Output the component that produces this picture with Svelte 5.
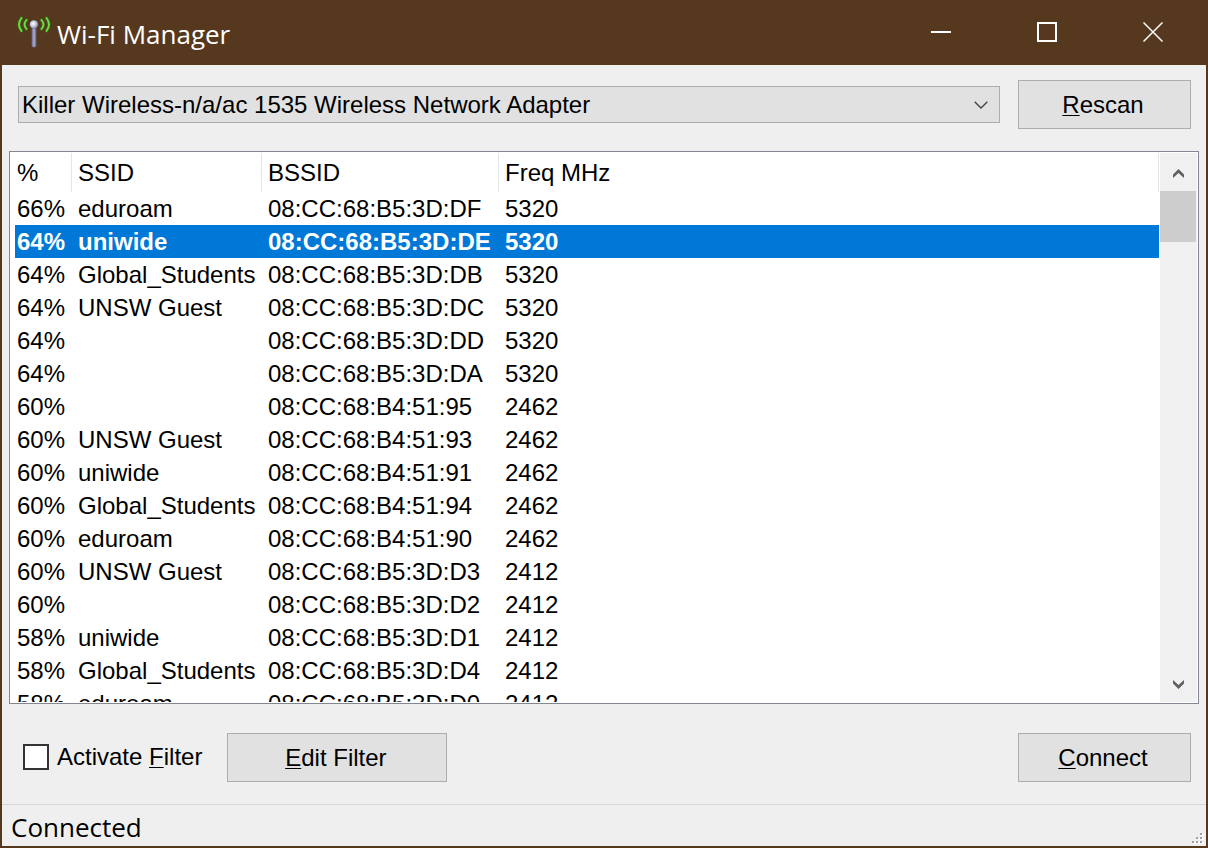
<script>
  const networks = $state([
    { signal: '66%', ssid: 'eduroam', bssid: '08:CC:68:B5:3D:DF', freq: 5320 },
    { signal: '64%', ssid: 'uniwide', bssid: '08:CC:68:B5:3D:DE', freq: 5320 },
    { signal: '64%', ssid: 'Global_Students', bssid: '08:CC:68:B5:3D:DB', freq: 5320 },
    { signal: '64%', ssid: 'UNSW Guest', bssid: '08:CC:68:B5:3D:DC', freq: 5320 },
    { signal: '64%', ssid: '', bssid: '08:CC:68:B5:3D:DD', freq: 5320 },
    { signal: '64%', ssid: '', bssid: '08:CC:68:B5:3D:DA', freq: 5320 },
    { signal: '60%', ssid: '', bssid: '08:CC:68:B4:51:95', freq: 2462 },
    { signal: '60%', ssid: 'UNSW Guest', bssid: '08:CC:68:B4:51:93', freq: 2462 },
    { signal: '60%', ssid: 'uniwide', bssid: '08:CC:68:B4:51:91', freq: 2462 },
    { signal: '60%', ssid: 'Global_Students', bssid: '08:CC:68:B4:51:94', freq: 2462 },
    { signal: '60%', ssid: 'eduroam', bssid: '08:CC:68:B4:51:90', freq: 2462 },
    { signal: '60%', ssid: 'UNSW Guest', bssid: '08:CC:68:B5:3D:D3', freq: 2412 },
    { signal: '60%', ssid: '', bssid: '08:CC:68:B5:3D:D2', freq: 2412 },
    { signal: '58%', ssid: 'uniwide', bssid: '08:CC:68:B5:3D:D1', freq: 2412 },
    { signal: '58%', ssid: 'Global_Students', bssid: '08:CC:68:B5:3D:D4', freq: 2412 },
    { signal: '58%', ssid: 'eduroam', bssid: '08:CC:68:B5:3D:D0', freq: 2412 }
  ]);
  let selected = $state(1);
  let filterActive = $state(false);
</script>

<div class="window">
  <header class="titlebar">
    <svg class="logo" width="34" height="34" viewBox="0 0 34 34" aria-hidden="true">
      <defs>
        <linearGradient id="mast" x1="0" x2="1" y1="0" y2="0">
          <stop offset="0" stop-color="#7d7fae" />
          <stop offset="0.5" stop-color="#a9abd6" />
          <stop offset="1" stop-color="#7375a2" />
        </linearGradient>
        <radialGradient id="ball" cx="0.4" cy="0.4" r="0.65">
          <stop offset="0" stop-color="#ffffff" />
          <stop offset="0.5" stop-color="#c9cbe0" />
          <stop offset="1" stop-color="#6f7198" />
        </radialGradient>
      </defs>
      <rect x="15" y="12" width="4" height="19" rx="1" fill="url(#mast)" stroke="#6f6a78" stroke-width="0.8" />
      <circle cx="17" cy="8.500" r="4.200" fill="url(#ball)" />
      <g fill="none" stroke="#2f7d1c" stroke-width="3.200" stroke-linecap="round" opacity="0.7">
        <path d="M9.500 4Q5.500 8.500 9.500 13M24.500 4Q28.500 8.500 24.500 13M4.500 2Q-0.500 8.500 4.500 15M29.500 2Q34.500 8.500 29.500 15" />
      </g>
      <g fill="none" stroke="#6fdc45" stroke-width="1.800" stroke-linecap="round">
        <path d="M9.500 4Q5.500 8.500 9.500 13M24.500 4Q28.500 8.500 24.500 13M4.500 2Q-0.500 8.500 4.500 15M29.500 2Q34.500 8.500 29.500 15" />
      </g>
    </svg>
    <h1>Wi-Fi Manager</h1>
    <div class="caption">
      <button aria-label="Minimize">
        <svg width="20" height="20" viewBox="0 0 20 20"><path d="M0 10H20" /></svg>
      </button>
      <button aria-label="Maximize">
        <svg width="20" height="20" viewBox="0 0 20 20"><rect x="1" y="1" width="18" height="18" /></svg>
      </button>
      <button aria-label="Close">
        <svg width="20" height="20" viewBox="0 0 20 20"><path class="thin" d="M0.500 0.500L19.500 19.500M19.500 0.500L0.500 19.500" /></svg>
      </button>
    </div>
  </header>

  <main>
    <div class="toolbar">
      <div class="combo">
        <select aria-label="Network adapter">
          <option>Killer Wireless-n/a/ac 1535 Wireless Network Adapter</option>
        </select>
        <svg width="14" height="8" viewBox="0 0 14 8" aria-hidden="true"><path d="M0.700 0.700L7 7L13.300 0.700" /></svg>
      </div>
      <button class="push"><u>R</u>escan</button>
    </div>

    <div class="list">
      <div class="rows">
        <table>
          <colgroup>
            <col class="c-signal" />
            <col class="c-ssid" />
            <col class="c-bssid" />
            <col />
          </colgroup>
          <thead>
            <tr><th>%</th><th>SSID</th><th>BSSID</th><th>Freq MHz</th></tr>
          </thead>
          <tbody>
            {#each networks as net, i}
              <tr class:selected={i === selected} onclick={() => (selected = i)}>
                <td>{net.signal}</td>
                <td>{net.ssid}</td>
                <td>{net.bssid}</td>
                <td>{net.freq}</td>
              </tr>
            {/each}
          </tbody>
        </table>
      </div>
      <div class="scrollbar">
        <button aria-label="Scroll up">
          <svg width="11" height="9" viewBox="0 0 11 9"><path d="M0 5.500L5.500 0L11 5.500V9L5.500 4L0 9Z" /></svg>
        </button>
        <div class="track"><div class="thumb"></div></div>
        <button aria-label="Scroll down">
          <svg width="11" height="9" viewBox="0 0 11 9"><path d="M0 3.500L5.500 9L11 3.500V0L5.500 5L0 0Z" /></svg>
        </button>
      </div>
    </div>

    <div class="actions">
      <label>
        <input type="checkbox" bind:checked={filterActive} />
        <span>Activate <u>F</u>ilter</span>
      </label>
      <button class="push wide"><u>E</u>dit Filter</button>
      <button class="push end"><u>C</u>onnect</button>
    </div>
  </main>

  <footer>
    <span>Connected</span>
    <svg width="12" height="12" viewBox="0 0 12 12" aria-hidden="true">
      <path fill="#fff" d="M9 1h3v2h-3zM5 5h3v2h-3zM9 5h3v2h-3zM1 9h3v2h-3zM5 9h3v2h-3zM9 9h3v2h-3z" />
      <path fill="#a0a0a0" d="M8 0h2v2h-2zM4 4h2v2h-2zM8 4h2v2h-2zM0 8h2v2h-2zM4 8h2v2h-2zM8 8h2v2h-2z" />
    </svg>
  </footer>
</div>

<style>
  :global(body) {
    margin: 0;
  }

  .window {
    box-sizing: border-box;
    height: 100vh;
    display: flex;
    flex-direction: column;
    border: solid #56381e;
    border-width: 0 2px 2px;
    background: #efefef;
    color: #000;
    font: 24px/32px "Liberation Sans", Arial, sans-serif;
  }

  button,
  select {
    font: inherit;
    color: inherit;
    border-radius: 0;
  }

  u {
    text-decoration-thickness: 1px;
    text-underline-offset: 2px;
    text-decoration-skip-ink: none;
  }

  .titlebar {
    flex: none;
    height: 65px;
    display: flex;
    align-items: center;
    gap: 6px;
    padding-left: 15px;
    background: #56381e;
    color: #fff;
  }

  h1 {
    flex: 1;
    margin: 0;
    padding-top: 2px;
    font: 400 26px/36px "Open Sans", "Segoe UI", sans-serif;
  }

  .caption {
    align-self: stretch;
    display: flex;
  }

  .caption button {
    width: 106px;
    padding: 0 0 1px;
    border: 0;
    background: none;
    display: grid;
    place-items: center;
  }

  .caption path,
  .caption rect {
    fill: none;
    stroke: #fff;
    stroke-width: 2;
  }

  .caption .thin {
    stroke-width: 1.5;
  }

  main {
    flex: 1;
    min-height: 0;
    display: flex;
    flex-direction: column;
    padding: 15px 7px 22px;
  }

  .toolbar,
  .actions {
    flex: none;
    display: flex;
    align-items: center;
    padding: 0 8px 0 9px;
  }

  .toolbar {
    gap: 18px;
    margin-bottom: 22px;
  }

  .combo {
    flex: 1;
    display: grid;
    align-items: center;
  }

  .combo > * {
    grid-area: 1 / 1;
  }

  .combo select {
    appearance: none;
    width: 100%;
    height: 37px;
    padding: 0 36px 0 3px;
    border: 1px solid #adadad;
    background: #e1e1e1;
  }

  .combo svg {
    justify-self: end;
    margin-right: 12px;
    pointer-events: none;
    fill: none;
    stroke: #404040;
    stroke-width: 1.3;
  }

  .push {
    box-sizing: border-box;
    width: 173px;
    height: 49px;
    padding: 0 3px 0 0;
    border: 1px solid #adadad;
    background: #e1e1e1;
  }

  .wide {
    width: 220px;
  }

  .end {
    margin-left: auto;
  }

  .list {
    flex: 1;
    min-height: 0;
    display: flex;
    gap: 1px;
    padding: 1px 1px 1px 5px;
    border: 1px solid #828790;
    background: #fff;
  }

  .rows {
    flex: 1;
    overflow-y: auto;
    scrollbar-width: none;
  }

  table {
    width: 100%;
    table-layout: fixed;
    border-collapse: separate;
    border-spacing: 0;
  }

  .c-signal {
    width: 57px;
  }

  .c-ssid {
    width: 190px;
  }

  .c-bssid {
    width: 237px;
  }

  th,
  td {
    padding: 0 0 0 6px;
    text-align: left;
    white-space: nowrap;
    line-height: 33px;
  }

  th:first-child,
  td:first-child {
    padding-left: 2px;
  }

  th {
    position: sticky;
    top: 0;
    height: 39px;
    box-sizing: border-box;
    border-right: 1px solid #e5e5e5;
    background: #fff;
    font-weight: 400;
  }

  td {
    height: 33px;
  }

  .selected td {
    background: #0078d7;
    color: #fff;
    font-weight: 700;
  }

  .scrollbar {
    width: 37px;
    display: flex;
    flex-direction: column;
    background: #f0f0f0;
  }

  .scrollbar button {
    height: 38px;
    padding: 2px 0 0;
    border: 0;
    background: none;
    display: grid;
    place-items: center;
  }

  .scrollbar svg {
    fill: #606060;
  }

  .track {
    flex: 1;
  }

  .thumb {
    width: 36px;
    height: 51px;
    background: #cdcdcd;
  }

  .actions {
    margin-top: 29px;
    padding-left: 14px;
    gap: 25px;
  }

  label {
    display: flex;
    align-items: center;
    gap: 8px;
    padding-bottom: 2px;
  }

  input {
    appearance: none;
    box-sizing: border-box;
    width: 26px;
    height: 26px;
    margin: 0;
    border: 2px solid #333;
    background: #fff;
  }

  input:checked {
    background: #333;
    box-shadow: inset 0 0 0 4px #fff;
  }

  footer {
    flex: none;
    height: 41px;
    display: flex;
    justify-content: space-between;
    align-items: center;
    padding: 0 2px 0 9px;
    border-top: 1px solid #d7d7d7;
    font: 26px/36px "Open Sans", "Segoe UI", sans-serif;
  }

  footer span {
    padding-top: 2px;
  }

  footer svg {
    align-self: flex-end;
    margin-bottom: 1px;
  }
</style>
